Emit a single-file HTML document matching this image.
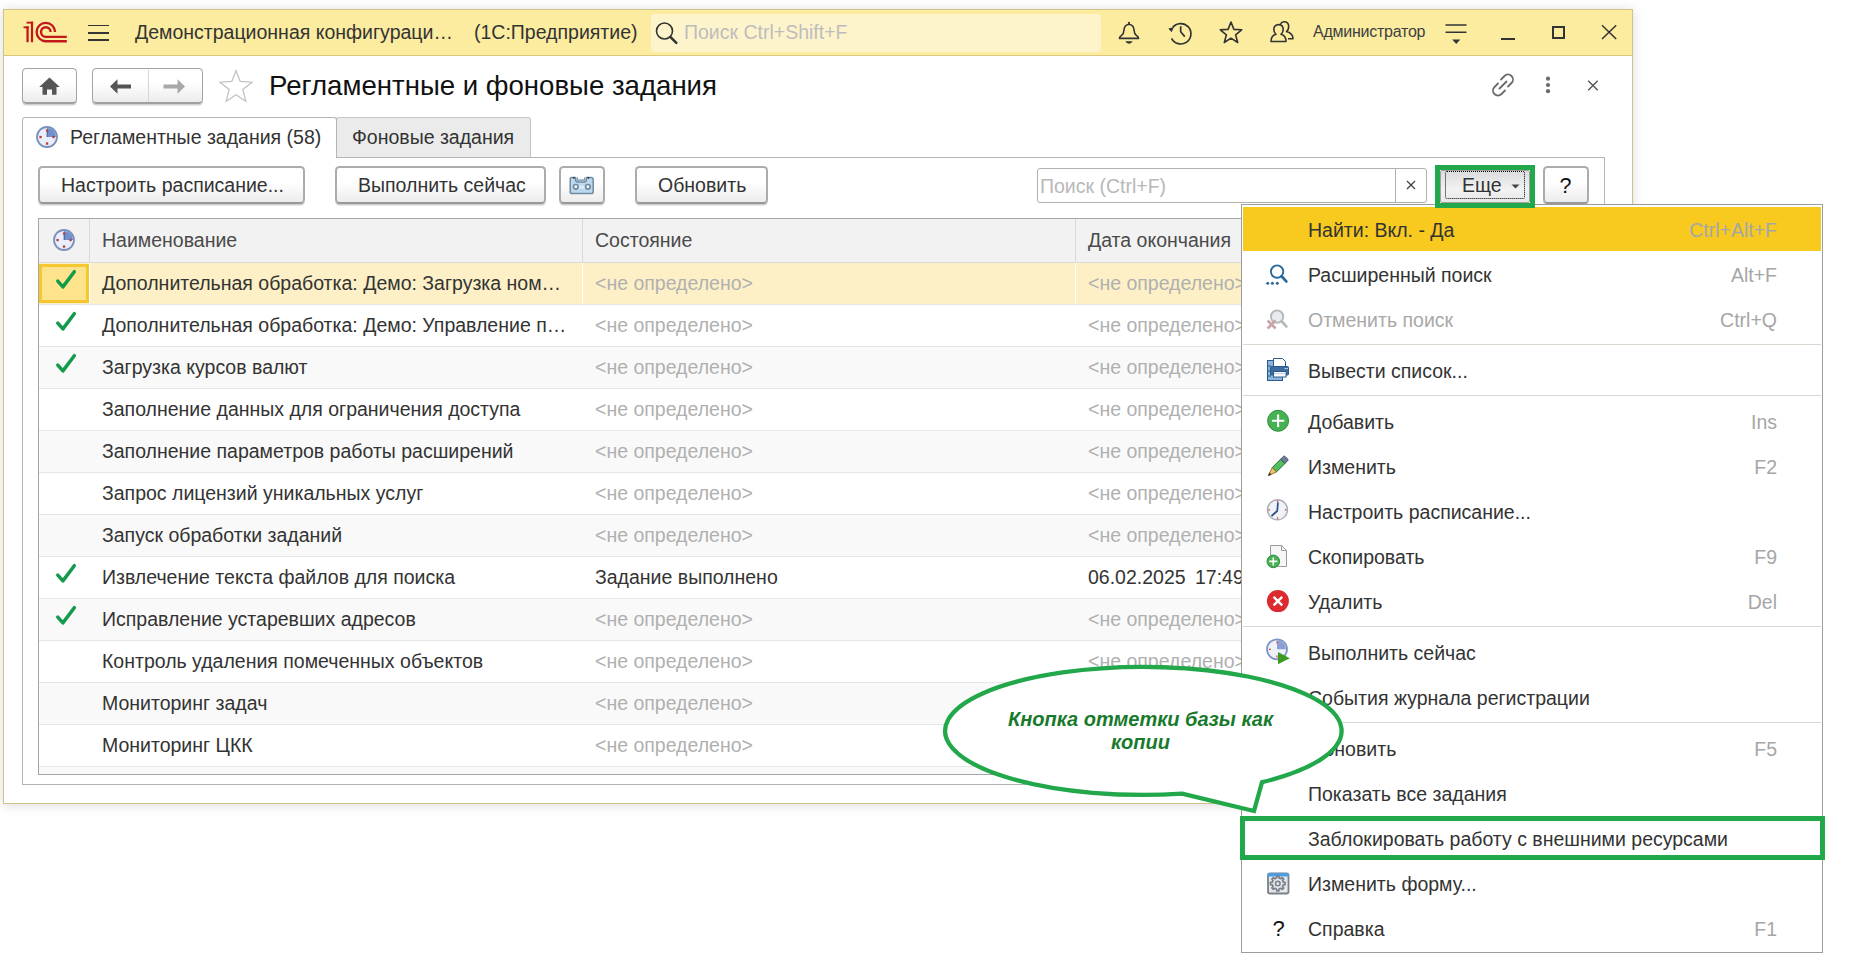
<!DOCTYPE html>
<html><head><meta charset="utf-8">
<style>
*{margin:0;padding:0;box-sizing:border-box}
html,body{width:1850px;height:970px;overflow:hidden;background:#fff;font-family:"Liberation Sans",sans-serif;color:#333}
.a{position:absolute}
.t{position:absolute;white-space:nowrap;font-size:19.5px;line-height:22px}
svg{position:absolute;overflow:visible}
.win{left:3px;top:9px;width:1630px;height:795px;border:1px solid #cfc38b;background:#fff;box-shadow:0 1px 11px rgba(0,0,0,.15)}
.hdr{left:4px;top:10px;width:1628px;height:46px;background:#fbeca0;border-bottom:1px solid #d9c77d}
.btn{position:absolute;border:2px solid #acacac;border-bottom:2px solid #989898;border-radius:4.5px;background:linear-gradient(#fff 0%,#fff 42%,#ececec 100%);box-shadow:0 1.5px 0.5px #d0d0d0}
.row{position:absolute;left:39px;width:1202px;height:42px;border-bottom:1px solid #e4e4e4}
.mi{position:absolute;left:1308px;font-size:19.5px;line-height:22px;color:#333;white-space:nowrap}
.sc{position:absolute;right:73px;font-size:19.5px;line-height:22px;color:#a6a6a6;white-space:nowrap}
.sep{position:absolute;left:1243px;width:578px;height:1px;background:#d8d8d0}
</style></head><body>

<!-- window -->
<div class="a win"></div>
<div class="a hdr"></div>

<!-- 1C logo -->
<svg width="80" height="50" style="left:0;top:0" viewBox="0 0 80 50">
 <g fill="#c2171b">
  <rect x="23.5" y="26.4" width="5.2" height="1.8"/>
  <rect x="26.4" y="26.4" width="2.3" height="15.8"/>
  <rect x="26.6" y="21.7" width="6.5" height="1.9"/>
  <rect x="30.9" y="21.7" width="2.2" height="20.5"/>
 </g>
 <g fill="none" stroke="#c2171b" stroke-width="2.35">
  <path d="M55 32 A9.2 9.2 0 1 0 45.8 41.2 L66.8 41.2"/>
  <path d="M50.6 32 A4.8 4.8 0 1 0 45.8 36.8 L66.8 36.8"/>
 </g>
</svg>
<!-- hamburger -->
<svg width="30" height="30" style="left:0;top:0" viewBox="0 0 30 30">
</svg>
<div class="a" style="left:87.5px;top:24.5px;width:21px;height:1.7px;background:#333"></div>
<div class="a" style="left:87.5px;top:32px;width:21px;height:1.7px;background:#333"></div>
<div class="a" style="left:87.5px;top:39.3px;width:21px;height:1.7px;background:#333"></div>

<div class="t" style="left:135px;top:21px;color:#333">Демонстрационная конфигураци…</div>
<div class="t" style="left:474px;top:21px;color:#333">(1С:Предприятие)</div>

<!-- header search -->
<div class="a" style="left:651px;top:13.5px;width:450px;height:38px;background:#fdf4cc;border-radius:4px"></div>
<svg width="24" height="24" style="left:655px;top:21px" viewBox="0 0 24 24">
 <circle cx="9.5" cy="10" r="8" fill="none" stroke="#333" stroke-width="1.6"/>
 <path d="M15.3 15.8 L21.3 21.8" stroke="#333" stroke-width="2.6" stroke-linecap="round"/>
</svg>
<div class="t" style="left:684px;top:21px;color:#bdbdbd">Поиск Ctrl+Shift+F</div>

<!-- header icons -->
<svg width="24" height="26" style="left:1117px;top:20px" viewBox="0 0 24 26" fill="none" stroke="#333" stroke-width="1.6">
 <path d="M2.4 18.4 Q2.4 16.9 4.6 15.4 Q6.8 13.8 7 10 Q7.3 5 12 4.3 Q16.7 5 17 10 Q17.2 13.8 19.4 15.4 Q21.6 16.9 21.6 18.4 Z" stroke-linejoin="round"/>
 <circle cx="12" cy="2.9" r="1.1" fill="#333" stroke="none"/>
 <path d="M8.3 21.3 H15.7 Q14.5 23.6 12 23.7 Q9.5 23.6 8.3 21.3 Z" fill="#333" stroke="none"/>
</svg>
<svg width="26" height="26" style="left:1167px;top:20px" viewBox="0 0 26 26" fill="none" stroke="#333" stroke-width="1.7">
 <path d="M5.6 7.6 A10.2 10.2 0 1 1 4.6 18.3"/>
 <path d="M1.3 8.4 L6.8 7.2 L4.6 12.3 Z" fill="#333" stroke="none"/>
 <path d="M13.7 6.3 V11.8 L17.8 16.6"/>
</svg>
<svg width="26" height="26" style="left:1218px;top:19.5px" viewBox="0 0 26 26" fill="none" stroke="#333" stroke-width="1.6" stroke-linejoin="round">
 <path d="M13 2 L15.9 9.4 L23.7 9.8 L17.6 14.8 L19.7 22.5 L13 18.2 L6.3 22.5 L8.4 14.8 L2.3 9.8 L10.1 9.4 Z"/>
</svg>
<svg width="26" height="24" style="left:1269px;top:20px" viewBox="0 0 26 24" fill="none" stroke="#333" stroke-width="1.6" stroke-linejoin="round">
 <path d="M2 21.5 C2 17 4.5 15 7 14.3 C5.5 13 4.8 11.5 4.8 9.5 C4.8 6.5 6.8 4.6 9.5 4.6 C12.2 4.6 14.2 6.5 14.2 9.5 C14.2 11.5 13.5 13 12 14.3 C14.5 15 17 17 17 21.5 Z"/>
 <path d="M11.5 4 C12.2 2.5 13.5 1.8 15 1.8 C17.7 1.8 19.7 3.7 19.7 6.7 C19.7 8.7 19 10.2 17.5 11.5 C21 12.5 24 14.2 24 18.7 H19"/>
</svg>
<div class="t" style="left:1313px;top:20.5px;font-size:16px;letter-spacing:-0.25px;color:#404040">Администратор</div>
<svg width="24" height="24" style="left:1444px;top:22px" viewBox="0 0 24 24">
 <path d="M1.5 3 H22.5 M1.5 10.3 H22.5" stroke="#333" stroke-width="1.6"/>
 <path d="M8.2 17.6 H16.3 L12.25 21.9 Z" fill="#333"/>
</svg>
<div class="a" style="left:1501px;top:37.5px;width:14px;height:2.2px;background:#333"></div>
<div class="a" style="left:1551.5px;top:25.5px;width:13.5px;height:13.5px;border:2px solid #333"></div>
<svg width="18" height="18" style="left:1600px;top:24px" viewBox="0 0 18 18">
 <path d="M2 1.2 L16.2 15 M16.2 1.2 L2 15" stroke="#333" stroke-width="1.5"/>
</svg>

<!-- nav buttons -->
<div class="btn" style="left:22px;top:68px;width:55px;height:36px;border:1.5px solid #a3a3a3;border-bottom:2px solid #a0a0a0"></div>
<svg width="24" height="20" style="left:38px;top:76px" viewBox="0 0 24 20">
 <path d="M11.5 1.5 L21.8 11 H18.5 V18.7 H14 V13.5 H9 V18.7 H4.5 V11 H1.2 Z" fill="#555"/>
</svg>
<div class="btn" style="left:92px;top:68px;width:111px;height:36px;border:1.5px solid #a3a3a3;border-bottom:2px solid #a0a0a0"></div>
<div class="a" style="left:148px;top:70px;width:1px;height:32px;background:#d6d6d6"></div>
<svg width="24" height="18" style="left:109px;top:78px" viewBox="0 0 24 18">
 <path d="M1 8.5 L8.5 1.2 V6.5 H22 V10.5 H8.5 V15.8 Z" fill="#555"/>
</svg>
<svg width="24" height="18" style="left:162px;top:78px" viewBox="0 0 24 18">
 <path d="M23 8.5 L15.5 1.2 V6.5 H1.5 V10.5 H15.5 V15.8 Z" fill="#a8a8a8"/>
</svg>
<svg width="36" height="34" style="left:218px;top:69px" viewBox="0 0 36 34" fill="none" stroke="#c2c2c2" stroke-width="1.3" stroke-linejoin="miter">
 <path d="M18 1.8 L22.2 12.5 L34 13.2 L24.8 20.6 L27.8 32.2 L18 25.8 L8.2 32.2 L11.2 20.6 L2 13.2 L13.8 12.5 Z"/>
</svg>
<div class="t" style="left:269px;top:70px;font-size:27.6px;line-height:31px;color:#111">Регламентные и фоновые задания</div>

<svg width="26" height="26" style="left:1490px;top:72px" viewBox="0 0 26 26" fill="none" stroke="#6b6b6b" stroke-width="1.8" stroke-linecap="round">
 <path d="M11 7.5 L14.5 4 C16.5 2 19.5 2 21.5 4 C23.5 6 23.5 9 21.5 11 L18 14.5"/>
 <path d="M15 18.5 L11.5 22 C9.5 24 6.5 24 4.5 22 C2.5 20 2.5 17 4.5 15 L8 11.5"/>
 <path d="M9.5 16.5 L16.5 9.5"/>
</svg>
<svg width="8" height="20" style="left:1544px;top:75px" viewBox="0 0 8 20" fill="#6b6b6b">
 <circle cx="4" cy="3.7" r="2.1"/><circle cx="4" cy="10" r="2.1"/><circle cx="4" cy="16.2" r="2.1"/>
</svg>
<svg width="14" height="14" style="left:1586px;top:78.5px" viewBox="0 0 14 14">
 <path d="M2.2 1.8 L11.7 11.3 M11.7 1.8 L2.2 11.3" stroke="#555" stroke-width="1.4"/>
</svg>

<!-- tabs -->
<div class="a" style="left:22px;top:157px;width:1583px;height:628px;border:1px solid #b5b5b5"></div>
<div class="a" style="left:336px;top:117px;width:195px;height:41px;background:#ebebeb;border:1px solid #c4c4c4;border-bottom:1px solid #b5b5b5;border-radius:3px 3px 0 0"></div>
<div class="a" style="left:22px;top:117px;width:315px;height:41px;background:#fff;border:1px solid #b5b5b5;border-bottom:none;border-radius:3px 3px 0 0"></div>
<svg width="24" height="24" style="left:35px;top:125px" viewBox="0 0 24 24">
 <circle cx="12" cy="12" r="10" fill="#e9eefa" stroke="#7890bc" stroke-width="1.8"/>
 <path d="M12 2.9 A9.1 9.1 0 0 1 21.1 12 L12 12 Z" fill="#7190d0"/>
 <g fill="#b53c3c"><rect x="10.9" y="4.4" width="2.3" height="2.3"/><rect x="4.4" y="10.9" width="2.3" height="2.3"/><rect x="17.4" y="10.9" width="2.3" height="2.3"/><rect x="10.9" y="17.4" width="2.3" height="2.3"/></g>
 <path d="M12.2 6.5 V12" stroke="#4d5f92" stroke-width="1.1" fill="none"/>
</svg>
<div class="t" style="left:70px;top:126px;color:#333">Регламентные задания (58)</div>
<div class="t" style="left:352px;top:126px;color:#333">Фоновые задания</div>

<!-- toolbar -->
<div class="btn" style="left:38px;top:166px;width:267px;height:38px"></div>
<div class="t" style="left:61px;top:174px">Настроить расписание...</div>
<div class="btn" style="left:335px;top:166px;width:211px;height:38px"></div>
<div class="t" style="left:358px;top:174px">Выполнить сейчас</div>
<div class="btn" style="left:559px;top:166px;width:46px;height:38px"></div>
<svg width="30" height="24" style="left:565px;top:172px" viewBox="0 0 30 24">
 <path d="M6.5 5.5 H10.6 V7.5 Q10.6 10 13 10 H19 Q21.4 10 21.4 7.5 V5.5 H26 Q28.2 5.5 28.2 7.7 V19.4 Q28.2 21.6 26 21.6 H7.3 Q5.2 21.6 5.2 19.4 V7.7 Q5.2 5.5 6.5 5.5 Z" fill="#bcd7ee" stroke="#6f8ba1" stroke-width="1.5" stroke-linejoin="round"/>
 <path d="M12.3 5.4 V7.2 Q12.3 8.2 13.3 8.2 H18.7 Q19.7 8.2 19.7 7.2 V5.4" fill="none" stroke="#6f8ba1" stroke-width="1.2"/>
 <circle cx="8.9" cy="5.8" r="0.9" fill="#222"/><circle cx="23.4" cy="5.8" r="0.9" fill="#222"/>
 <rect x="13.2" y="13.5" width="6.6" height="3.3" fill="#ddeaf6"/>
 <circle cx="10.8" cy="14.8" r="2.3" fill="#fff" stroke="#6f8ba1" stroke-width="1.7"/>
 <circle cx="22.9" cy="14.8" r="2.3" fill="#fff" stroke="#6f8ba1" stroke-width="1.7"/>
</svg>
<div class="btn" style="left:635px;top:166px;width:133px;height:38px"></div>
<div class="t" style="left:658px;top:174px">Обновить</div>

<div class="a" style="left:1037px;top:168px;width:390px;height:35px;border:1px solid #b0b0b0;border-radius:3px;background:#fff"></div>
<div class="a" style="left:1395px;top:169px;width:1px;height:33px;background:#b0b0b0"></div>
<div class="t" style="left:1040px;top:175px;color:#b8b8b8">Поиск (Ctrl+F)</div>
<svg width="12" height="12" style="left:1404.5px;top:178.5px" viewBox="0 0 12 12">
 <path d="M2 2 L10 10 M10 2 L2 10" stroke="#444" stroke-width="1.3"/>
</svg>

<!-- Еще -->
<div class="a" style="left:1440px;top:170px;width:90px;height:33px;border:1.5px solid #a0a0a0;border-radius:2px;background:linear-gradient(#dcdcdc,#f2f2f2 60%,#e8e8e8)"></div>
<div class="a" style="left:1445px;top:171px;width:80px;height:28px;border:1.5px dotted #000;border-radius:2px"></div>
<div class="t" style="left:1462px;top:174px;color:#333">Еще</div>
<svg width="10" height="6" style="left:1511px;top:184px" viewBox="0 0 10 6"><path d="M0.5 0.5 H8.5 L4.5 4.5 Z" fill="#444"/></svg>
<div class="a" style="left:1435px;top:165px;width:100px;height:42.5px;border:5px solid #21a84a;z-index:5"></div>

<div class="btn" style="left:1543px;top:166px;width:46px;height:38px"></div>
<div class="t" style="left:1559.5px;top:175px;font-size:21.5px;color:#111">?</div>

<!-- table -->
<div class="a" style="left:38px;top:218px;width:1300px;height:557px;border:1px solid #a6a6a6;overflow:hidden;background:#fff" id="tbl">
</div>
<div class="a" style="left:39px;top:219px;width:1202px;height:44px;background:#f2f2f2;border-bottom:1px solid #d9d9d9"></div>
<div class="a" style="left:89px;top:219px;width:1px;height:43px;background:#d9d9d9"></div>
<div class="a" style="left:582px;top:219px;width:1px;height:43px;background:#d9d9d9"></div>
<div class="a" style="left:1075px;top:219px;width:1px;height:43px;background:#d9d9d9"></div>
<svg width="24" height="24" style="left:52px;top:228px" viewBox="0 0 24 24">
 <circle cx="12" cy="12" r="10" fill="#e9eefa" stroke="#7890bc" stroke-width="1.8"/>
 <path d="M12 2.9 A9.1 9.1 0 0 1 21.1 12 L12 12 Z" fill="#7190d0"/>
 <g fill="#b53c3c"><rect x="10.9" y="4.4" width="2.3" height="2.3"/><rect x="4.4" y="10.9" width="2.3" height="2.3"/><rect x="17.4" y="10.9" width="2.3" height="2.3"/><rect x="10.9" y="17.4" width="2.3" height="2.3"/></g>
 <path d="M12.2 6.5 V12" stroke="#4d5f92" stroke-width="1.1" fill="none"/>
</svg>
<div class="t" style="left:102px;top:229px;color:#4a4a4a">Наименование</div>
<div class="t" style="left:595px;top:229px;color:#4a4a4a">Состояние</div>
<div class="t" style="left:1088px;top:229px;color:#4a4a4a">Дата окончания</div>

<div class="a" style="left:39px;top:263px;width:1202px;height:41px;background:#fdf0c6"></div>
<div class="a" style="left:39px;top:304px;width:1202px;height:1px;background:#e6e6e6"></div>
<div class="a" style="left:89px;top:263px;width:1px;height:41px;background:#fff"></div>
<div class="a" style="left:582px;top:263px;width:1px;height:41px;background:#fff"></div>
<div class="a" style="left:1075px;top:263px;width:1px;height:41px;background:#fff"></div>
<div class="a" style="left:39px;top:264px;width:50px;height:39px;background:#fde38c;border:3px solid #f5c832"></div>
<svg width="30" height="30" style="left:50px;top:263px" viewBox="0 0 30 30"><path d="M7.8 18.1 L12.9 23.9 L24.3 8.7" fill="none" stroke="#139a4d" stroke-width="3.5" stroke-linecap="round" stroke-linejoin="round"/></svg>
<div class="t" style="left:102px;top:272px;color:#333">Дополнительная обработка: Демо: Загрузка ном…</div>
<div class="t" style="left:595px;top:272px;color:#b0b0b0">&lt;не определено&gt;</div>
<div class="t" style="left:1088px;top:272px;color:#b0b0b0">&lt;не определено&gt;</div>
<div class="a" style="left:39px;top:305px;width:1202px;height:41px;background:#fff"></div>
<div class="a" style="left:39px;top:346px;width:1202px;height:1px;background:#e6e6e6"></div>
<svg width="30" height="30" style="left:50px;top:305px" viewBox="0 0 30 30"><path d="M7.8 18.1 L12.9 23.9 L24.3 8.7" fill="none" stroke="#139a4d" stroke-width="3.5" stroke-linecap="round" stroke-linejoin="round"/></svg>
<div class="t" style="left:102px;top:314px;color:#333">Дополнительная обработка: Демо: Управление п…</div>
<div class="t" style="left:595px;top:314px;color:#b0b0b0">&lt;не определено&gt;</div>
<div class="t" style="left:1088px;top:314px;color:#b0b0b0">&lt;не определено&gt;</div>
<div class="a" style="left:39px;top:347px;width:1202px;height:41px;background:#f9f9f9"></div>
<div class="a" style="left:39px;top:388px;width:1202px;height:1px;background:#e6e6e6"></div>
<svg width="30" height="30" style="left:50px;top:347px" viewBox="0 0 30 30"><path d="M7.8 18.1 L12.9 23.9 L24.3 8.7" fill="none" stroke="#139a4d" stroke-width="3.5" stroke-linecap="round" stroke-linejoin="round"/></svg>
<div class="t" style="left:102px;top:356px;color:#333">Загрузка курсов валют</div>
<div class="t" style="left:595px;top:356px;color:#b0b0b0">&lt;не определено&gt;</div>
<div class="t" style="left:1088px;top:356px;color:#b0b0b0">&lt;не определено&gt;</div>
<div class="a" style="left:39px;top:389px;width:1202px;height:41px;background:#fff"></div>
<div class="a" style="left:39px;top:430px;width:1202px;height:1px;background:#e6e6e6"></div>
<div class="t" style="left:102px;top:398px;color:#333">Заполнение данных для ограничения доступа</div>
<div class="t" style="left:595px;top:398px;color:#b0b0b0">&lt;не определено&gt;</div>
<div class="t" style="left:1088px;top:398px;color:#b0b0b0">&lt;не определено&gt;</div>
<div class="a" style="left:39px;top:431px;width:1202px;height:41px;background:#f9f9f9"></div>
<div class="a" style="left:39px;top:472px;width:1202px;height:1px;background:#e6e6e6"></div>
<div class="t" style="left:102px;top:440px;color:#333">Заполнение параметров работы расширений</div>
<div class="t" style="left:595px;top:440px;color:#b0b0b0">&lt;не определено&gt;</div>
<div class="t" style="left:1088px;top:440px;color:#b0b0b0">&lt;не определено&gt;</div>
<div class="a" style="left:39px;top:473px;width:1202px;height:41px;background:#fff"></div>
<div class="a" style="left:39px;top:514px;width:1202px;height:1px;background:#e6e6e6"></div>
<div class="t" style="left:102px;top:482px;color:#333">Запрос лицензий уникальных услуг</div>
<div class="t" style="left:595px;top:482px;color:#b0b0b0">&lt;не определено&gt;</div>
<div class="t" style="left:1088px;top:482px;color:#b0b0b0">&lt;не определено&gt;</div>
<div class="a" style="left:39px;top:515px;width:1202px;height:41px;background:#f9f9f9"></div>
<div class="a" style="left:39px;top:556px;width:1202px;height:1px;background:#e6e6e6"></div>
<div class="t" style="left:102px;top:524px;color:#333">Запуск обработки заданий</div>
<div class="t" style="left:595px;top:524px;color:#b0b0b0">&lt;не определено&gt;</div>
<div class="t" style="left:1088px;top:524px;color:#b0b0b0">&lt;не определено&gt;</div>
<div class="a" style="left:39px;top:557px;width:1202px;height:41px;background:#fff"></div>
<div class="a" style="left:39px;top:598px;width:1202px;height:1px;background:#e6e6e6"></div>
<svg width="30" height="30" style="left:50px;top:557px" viewBox="0 0 30 30"><path d="M7.8 18.1 L12.9 23.9 L24.3 8.7" fill="none" stroke="#139a4d" stroke-width="3.5" stroke-linecap="round" stroke-linejoin="round"/></svg>
<div class="t" style="left:102px;top:566px;color:#333">Извлечение текста файлов для поиска</div>
<div class="t" style="left:595px;top:566px;color:#333">Задание выполнено</div>
<div class="t" style="left:1088px;top:566px;color:#333;word-spacing:4px">06.02.2025 17:49</div>
<div class="a" style="left:39px;top:599px;width:1202px;height:41px;background:#f9f9f9"></div>
<div class="a" style="left:39px;top:640px;width:1202px;height:1px;background:#e6e6e6"></div>
<svg width="30" height="30" style="left:50px;top:599px" viewBox="0 0 30 30"><path d="M7.8 18.1 L12.9 23.9 L24.3 8.7" fill="none" stroke="#139a4d" stroke-width="3.5" stroke-linecap="round" stroke-linejoin="round"/></svg>
<div class="t" style="left:102px;top:608px;color:#333">Исправление устаревших адресов</div>
<div class="t" style="left:595px;top:608px;color:#b0b0b0">&lt;не определено&gt;</div>
<div class="t" style="left:1088px;top:608px;color:#b0b0b0">&lt;не определено&gt;</div>
<div class="a" style="left:39px;top:641px;width:1202px;height:41px;background:#fff"></div>
<div class="a" style="left:39px;top:682px;width:1202px;height:1px;background:#e6e6e6"></div>
<div class="t" style="left:102px;top:650px;color:#333">Контроль удаления помеченных объектов</div>
<div class="t" style="left:595px;top:650px;color:#b0b0b0">&lt;не определено&gt;</div>
<div class="t" style="left:1088px;top:650px;color:#b0b0b0">&lt;не определено&gt;</div>
<div class="a" style="left:39px;top:683px;width:1202px;height:41px;background:#f9f9f9"></div>
<div class="a" style="left:39px;top:724px;width:1202px;height:1px;background:#e6e6e6"></div>
<div class="t" style="left:102px;top:692px;color:#333">Мониторинг задач</div>
<div class="t" style="left:595px;top:692px;color:#b0b0b0">&lt;не определено&gt;</div>
<div class="t" style="left:1088px;top:692px;color:#b0b0b0">&lt;не определено&gt;</div>
<div class="a" style="left:39px;top:725px;width:1202px;height:41px;background:#fff"></div>
<div class="a" style="left:39px;top:766px;width:1202px;height:1px;background:#e6e6e6"></div>
<div class="t" style="left:102px;top:734px;color:#333">Мониторинг ЦКК</div>
<div class="t" style="left:595px;top:734px;color:#b0b0b0">&lt;не определено&gt;</div>
<div class="t" style="left:1088px;top:734px;color:#b0b0b0">&lt;не определено&gt;</div>
<div class="a" style="left:39px;top:767px;width:1202px;height:7px;background:#f9f9f9"></div>

<!-- menu -->
<div class="a" style="left:1241px;top:204px;width:582px;height:749px;background:#fff;border:1px solid #9c9c9c"></div>
<div class="a" style="left:1243px;top:207px;width:578px;height:44px;background:#f8ca20"></div>

<svg width="1850" height="970" style="left:0;top:0" viewBox="0 0 1850 970">
 <!-- adv search -->
 <g>
  <circle cx="1277.1" cy="271.6" r="6.2" fill="#fff" stroke="#2b6a9b" stroke-width="1.9"/>
  <path d="M1281.6 276.3 L1286.3 281.4" stroke="#2b6a9b" stroke-width="2.8" stroke-linecap="round"/>
  <g fill="#2b6a9b"><circle cx="1267.7" cy="283.2" r="1.5"/><circle cx="1272.4" cy="283.2" r="1.5"/><circle cx="1277.3" cy="283.2" r="1.5"/></g>
 </g>
 <!-- cancel search -->
 <g>
  <circle cx="1277.1" cy="316.6" r="6.2" fill="#e9ebef" stroke="#b3b9bd" stroke-width="1.9"/>
  <path d="M1281.6 321.3 L1286.3 326.4" stroke="#b3b9bd" stroke-width="2.8" stroke-linecap="round"/>
  <path d="M1267.6 320.5 L1275.6 328.5 M1275.6 320.5 L1267.6 328.5" stroke="#cba4aa" stroke-width="2.6"/>
 </g>
 <!-- printer -->
 <g stroke="#2a5a8a" stroke-width="1">
  <rect x="1267.5" y="360.5" width="15" height="20" fill="#8db4dc"/>
  <path d="M1267.5 366 H1271 M1267.5 371 H1271 M1267.5 376 H1271" stroke="#2a5a8a"/>
  <path d="M1273.5 358.5 H1282.5 L1285.5 361.5 V367 H1273.5 Z" fill="#fff"/>
  <rect x="1270.5" y="366.5" width="18" height="8.5" rx="1" fill="#3d6d9e"/>
  <rect x="1273.5" y="371.5" width="12.5" height="5.5" fill="#fff"/>
  <path d="M1274 373.5 H1285.5" stroke="#c9d3de" stroke-width="1.5"/>
  <circle cx="1285.3" cy="368.6" r="0.7" fill="#fff" stroke="none"/><circle cx="1287.2" cy="368.6" r="0.7" fill="#fff" stroke="none"/>
 </g>
 <!-- add -->
 <circle cx="1278.1" cy="420.8" r="10.5" fill="#46b152" stroke="#2f8d3f" stroke-width="1"/>
 <path d="M1278.1 414.6 V427 M1271.9 420.8 H1284.3" stroke="#fff" stroke-width="2.1"/>
 <!-- edit pencil -->
 <g>
  <path d="M1272.2 467.6 L1280.6 459.2 L1284.9 463.5 L1276.5 471.9 Z" fill="#4fc15a" stroke="#1f5a26" stroke-width="0.9"/>
  <path d="M1280.6 459.2 L1283.4 456.4 Q1284.2 455.6 1285 456.4 L1287.7 459.1 Q1288.5 459.9 1287.7 460.7 L1284.9 463.5 Z" fill="#6b7e96" stroke="#3d4a5a" stroke-width="0.9"/>
  <path d="M1272.2 467.6 L1276.5 471.9 L1268.2 475.8 Z" fill="#f2c266" stroke="#7a5a2a" stroke-width="0.8"/>
  <path d="M1268.2 475.8 L1269.5 472.5 L1271.5 474.5 Z" fill="#3a2a1a"/>
 </g>
 <!-- schedule clock -->
 <g>
  <circle cx="1277.5" cy="509.8" r="10" fill="#f0f2f6" stroke="#a9aebb" stroke-width="1.4"/>
  <path d="M1277.5 500.6 V502.4 M1277.5 517.2 V519 M1268.3 509.8 H1270.1 M1284.9 509.8 H1286.7" stroke="#e04a3a" stroke-width="1.3"/>
  <path d="M1278 502.5 L1277.2 511 L1271.5 516" fill="none" stroke="#2a4f8a" stroke-width="1.7" stroke-linejoin="round"/>
 </g>
 <!-- copy -->
 <g>
  <path d="M1270.5 545.5 H1281.5 L1286.5 550.5 V566.5 H1270.5 Z" fill="#f6f6f6" stroke="#9b9b9b" stroke-width="1"/>
  <path d="M1281.5 545.5 V550.5 H1286.5" fill="none" stroke="#9b9b9b" stroke-width="1"/>
  <circle cx="1273.3" cy="561.4" r="6.3" fill="#46b152" stroke="#2f8d3f" stroke-width="1"/>
  <path d="M1273.3 557.4 V565.4 M1269.3 561.4 H1277.3" stroke="#fff" stroke-width="1.6"/>
 </g>
 <!-- delete -->
 <circle cx="1277.9" cy="601.1" r="11" fill="#dc2a2e"/>
 <path d="M1273.6 596.8 L1282.2 605.4 M1282.2 596.8 L1273.6 605.4" stroke="#fff" stroke-width="2.4"/>
 <!-- run -->
 <g>
  <circle cx="1277" cy="649.3" r="10" fill="#eef1f9" stroke="#7d95c8" stroke-width="1.8"/>
  <path d="M1277 640.3 A9 9 0 0 1 1286 649.3 H1277 Z" fill="#8a9fd2"/>
  <path d="M1277 641.5 V643.5 M1268.9 649.3 H1270.9 M1277 655.5 V657.5" stroke="#e04a3a" stroke-width="1.3"/>
  <path d="M1278 652 L1289.8 658.2 L1278 664.2 Z" fill="#3c9b23"/>
 </g>
 <!-- form -->
 <g>
  <rect x="1268" y="873.5" width="20.5" height="20" rx="2" fill="#e4e7eb" stroke="#7b8189" stroke-width="1.8"/>
  <path d="M1267.5 876.5 V875 Q1267.5 873 1269.5 873 H1287 Q1289 873 1289 875 V876.5 Z" fill="#4c9ee3"/>
  <path d="M1283.25 882.19 L1285.13 882.46 L1285.13 884.54 L1283.25 884.81 L1282.57 886.43 L1283.72 887.94 L1282.24 889.42 L1280.73 888.27 L1279.11 888.95 L1278.84 890.83 L1276.76 890.83 L1276.49 888.95 L1274.87 888.27 L1273.36 889.42 L1271.88 887.94 L1273.03 886.43 L1272.35 884.81 L1270.47 884.54 L1270.47 882.46 L1272.35 882.19 L1273.03 880.57 L1271.88 879.06 L1273.36 877.58 L1274.87 878.73 L1276.49 878.05 L1276.76 876.17 L1278.84 876.17 L1279.11 878.05 L1280.73 878.73 L1282.24 877.58 L1283.72 879.06 L1282.57 880.57 Z" fill="#e4e7eb" stroke="#7b8189" stroke-width="1.7" stroke-linejoin="round"/>
  <circle cx="1277.8" cy="883.5" r="2.3" fill="#e4e7eb" stroke="#7b8189" stroke-width="1.5"/>
 </g>
</svg>

<div class="mi" style="top:218.5px;color:#333">Найти: Вкл. - Да</div>
<div class="sc" style="top:218.5px">Ctrl+Alt+F</div>
<div class="mi" style="top:263.5px;color:#333">Расширенный поиск</div>
<div class="sc" style="top:263.5px">Alt+F</div>
<div class="mi" style="top:308.5px;color:#a9a9a9">Отменить поиск</div>
<div class="sc" style="top:308.5px">Ctrl+Q</div>
<div class="sep" style="top:344px"></div>
<div class="mi" style="top:359.5px;color:#333">Вывести список...</div>
<div class="sep" style="top:395px"></div>
<div class="mi" style="top:410.5px;color:#333">Добавить</div>
<div class="sc" style="top:410.5px">Ins</div>
<div class="mi" style="top:455.5px;color:#333">Изменить</div>
<div class="sc" style="top:455.5px">F2</div>
<div class="mi" style="top:500.5px;color:#333">Настроить расписание...</div>
<div class="mi" style="top:545.5px;color:#333">Скопировать</div>
<div class="sc" style="top:545.5px">F9</div>
<div class="mi" style="top:590.5px;color:#333">Удалить</div>
<div class="sc" style="top:590.5px">Del</div>
<div class="sep" style="top:626px"></div>
<div class="mi" style="top:641.5px;color:#333">Выполнить сейчас</div>
<div class="mi" style="top:686.5px;color:#333">События журнала регистрации</div>
<div class="sep" style="top:722px"></div>
<div class="mi" style="top:737.5px;color:#333">Обновить</div>
<div class="sc" style="top:737.5px">F5</div>
<div class="mi" style="top:782.5px;color:#333">Показать все задания</div>
<div class="mi" style="top:827.5px;color:#333">Заблокировать работу с внешними ресурсами</div>
<div class="mi" style="top:872.5px;color:#333">Изменить форму...</div>
<div class="t" style="left:1272.5px;top:917.5px;font-size:22px;color:#111">?</div>
<div class="mi" style="top:917.5px;color:#333">Справка</div>
<div class="sc" style="top:917.5px">F1</div>
<div class="a" style="left:1240px;top:816px;width:585px;height:44px;border:5px solid #21a84a"></div>

<!-- callout -->
<svg width="1850" height="970" style="left:0;top:0" viewBox="0 0 1850 970">
 <path d="M1182 793.7 L1254 811 L1262 782.2 A198.25 64 0 1 0 1182 793.7 Z" fill="#fff" stroke="#22a84a" stroke-width="4.3" stroke-linejoin="miter"/>
</svg>
<div class="t" style="left:940.5px;top:707.5px;width:400px;text-align:center;font-weight:bold;font-style:italic;font-size:20px;line-height:23.4px;color:#187a2c;white-space:normal">Кнопка отметки базы как<br>копии</div>

</body></html>
